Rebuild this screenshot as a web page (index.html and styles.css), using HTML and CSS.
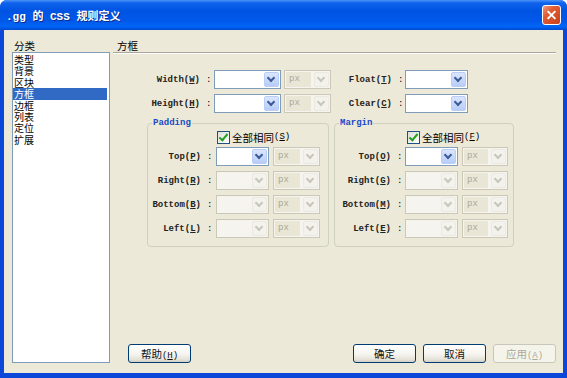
FILE: index.html
```html
<!DOCTYPE html>
<html lang="zh-CN">
<head>
  <meta charset="UTF-8" />
  <meta name="viewport" content="width=device-width, initial-scale=1.0" />
  <title>.gg 的 CSS 规则定义</title>
  <link rel="stylesheet" href="styles.css">
</head>
<body>
  <div class="window">
    <div class="titlebar">
      <span class="title">.gg 的 CSS 规则定义</span>
      <span class="close"></span>
    </div>

    <div class="client">
      <div class="categories">
        <div class="cap cjk">分类</div>
        <ul class="list cjk">
          <li>类型</li>
          <li>背景</li>
          <li>区块</li>
          <li class="sel">方框</li>
          <li>边框</li>
          <li>列表</li>
          <li>定位</li>
          <li>扩展</li>
        </ul>
      </div>

      <div class="panel">
        <div class="heading cjk">方框</div>

        <div class="top-fields">
          <div class="rows group-left">
            <div class="row">
              <span class="lbl">Width(<u>W</u>)</span><span class="colon">:</span>
              <span class="combo size"><span class="val"></span><span class="drop"></span></span>
              <span class="combo unit off"><span class="val">px</span><span class="drop"></span></span>
            </div>
            <div class="row">
              <span class="lbl">Height(<u>H</u>)</span><span class="colon">:</span>
              <span class="combo size"><span class="val"></span><span class="drop"></span></span>
              <span class="combo unit off"><span class="val">px</span><span class="drop"></span></span>
            </div>
          </div>
          <div class="rows group-right">
            <div class="row">
              <span class="lbl">Float(<u>T</u>)</span><span class="colon">:</span>
              <span class="combo float"><span class="val"></span><span class="drop"></span></span>
            </div>
            <div class="row">
              <span class="lbl">Clear(<u>C</u>)</span><span class="colon">:</span>
              <span class="combo float"><span class="val"></span><span class="drop"></span></span>
            </div>
          </div>
        </div>

        <div class="boxes">
          <fieldset class="box box-padding">
            <legend>Padding</legend>
            <div class="same"><span class="check"></span><span class="cjk">全部相同</span>(<u>S</u>)</div>
            <div class="rows">
              <div class="row">
                <span class="lbl">Top(<u>P</u>)</span><span class="colon">:</span>
                <span class="combo side"><span class="val"></span><span class="drop"></span></span>
                <span class="combo unit off"><span class="val">px</span><span class="drop"></span></span>
              </div>
              <div class="row">
                <span class="lbl">Right(<u>R</u>)</span><span class="colon">:</span>
                <span class="combo side off"><span class="val"></span><span class="drop"></span></span>
                <span class="combo unit off"><span class="val">px</span><span class="drop"></span></span>
              </div>
              <div class="row">
                <span class="lbl">Bottom(<u>B</u>)</span><span class="colon">:</span>
                <span class="combo side off"><span class="val"></span><span class="drop"></span></span>
                <span class="combo unit off"><span class="val">px</span><span class="drop"></span></span>
              </div>
              <div class="row">
                <span class="lbl">Left(<u>L</u>)</span><span class="colon">:</span>
                <span class="combo side off"><span class="val"></span><span class="drop"></span></span>
                <span class="combo unit off"><span class="val">px</span><span class="drop"></span></span>
              </div>
            </div>
          </fieldset>

          <fieldset class="box box-margin">
            <legend>Margin</legend>
            <div class="same"><span class="check"></span><span class="cjk">全部相同</span>(<u>F</u>)</div>
            <div class="rows">
              <div class="row">
                <span class="lbl">Top(<u>O</u>)</span><span class="colon">:</span>
                <span class="combo side"><span class="val"></span><span class="drop"></span></span>
                <span class="combo unit off"><span class="val">px</span><span class="drop"></span></span>
              </div>
              <div class="row">
                <span class="lbl">Right(<u>G</u>)</span><span class="colon">:</span>
                <span class="combo side off"><span class="val"></span><span class="drop"></span></span>
                <span class="combo unit off"><span class="val">px</span><span class="drop"></span></span>
              </div>
              <div class="row">
                <span class="lbl">Bottom(<u>M</u>)</span><span class="colon">:</span>
                <span class="combo side off"><span class="val"></span><span class="drop"></span></span>
                <span class="combo unit off"><span class="val">px</span><span class="drop"></span></span>
              </div>
              <div class="row">
                <span class="lbl">Left(<u>E</u>)</span><span class="colon">:</span>
                <span class="combo side off"><span class="val"></span><span class="drop"></span></span>
                <span class="combo unit off"><span class="val">px</span><span class="drop"></span></span>
              </div>
            </div>
          </fieldset>
        </div>

        <div class="footer">
          <button class="btn"><span class="cjk">帮助</span>(<u>H</u>)</button>
          <button class="btn push cjk">确定</button>
          <button class="btn cjk">取消</button>
          <button class="btn" disabled><span class="cjk">应用</span>(<u>A</u>)</button>
        </div>
      </div>
    </div>
  </div>
</body>
</html>
```

FILE: styles.css
```css
* {
  box-sizing: border-box;
}
body {
  margin: 0;
  background: #fff;
  font-family: "Liberation Mono", "Noto Sans CJK SC", monospace;
  font-size: 9px;
  color: #000;
}
.cjk {
  font-family: "Noto Sans CJK SC", sans-serif;
  font-size: 10.5px;
}

/* window frame */
.window {
  width: 567px;
  height: 378px;
  display: flex;
  flex-direction: column;
  background: #0b47d8;
  border-radius: 7px 7px 0 0;
  overflow: hidden;
}
.titlebar {
  height: 30px;
  flex-shrink: 0;
  display: flex;
  align-items: center;
  justify-content: space-between;
  padding: 0 6px 0 6px;
  background: linear-gradient(to bottom, #4a93f8 0%, #0f62ea 10%, #0054e3 35%, #0058ea 70%, #0066f7 88%, #0049d0 100%);
  color: #fff;
}
.title {
  font-family: "Liberation Mono", "Noto Sans CJK SC", monospace;
  font-size: 11px;
  font-weight: bold;
  text-shadow: 1px 1px #0b2a90;
}
.close {
  position: relative;
  width: 19px;
  height: 20px;
  border: 1px solid #fff;
  border-radius: 3px;
  background: linear-gradient(135deg, #f29b7d 0%, #e25c33 35%, #c8401b 100%);
}
.close::before,
.close::after {
  content: "";
  position: absolute;
  left: 3px;
  top: 8px;
  width: 11px;
  height: 2px;
  background: #fff;
  transform: rotate(45deg);
}
.close::after {
  transform: rotate(-45deg);
}

.client {
  flex: 1;
  margin: 0 4px 5px 4px;
  background: #ece9d8;
  display: flex;
  gap: 3px;
  padding: 9px 7px 10px 8px;
}

/* category list */
.categories {
  width: 98px;
  display: flex;
  flex-direction: column;
}
.cap {
  height: 13px;
  line-height: 13px;
  padding-left: 2px;
}
.list {
  flex: 1;
  margin: 0;
  padding: 1px 0 0 0;
  list-style: none;
  background: #fff;
  border: 1px solid #7f9db9;
  font-size: 10px;
}
.list li {
  line-height: 11.4px;
  height: 11.4px;
  padding-left: 1px;
  margin-right: 2px;
}
.list li.sel {
  background: #316ac5;
  color: #fff;
}

/* right panel */
.panel {
  flex: 1;
  display: flex;
  flex-direction: column;
}
.heading {
  height: 14px;
  line-height: 13px;
  padding-left: 4px;
  border-bottom: 1px solid #aca899;
  box-shadow: 0 1px 0 #fff;
}
.top-fields {
  display: flex;
  margin: 17px 0 0 27px;
}
.rows {
  display: flex;
  flex-direction: column;
  gap: 5px;
}
.row {
  display: flex;
  align-items: center;
  height: 19px;
}
.lbl {
  text-align: right;
  white-space: nowrap;
  font-weight: bold;
  color: #222;
}
.colon {
  padding-left: 6px;
}
.group-left .lbl { width: 60px; }
.group-left .colon { width: 14px; }
.group-right .lbl { width: 61px; }
.group-right .colon { width: 13px; }

/* combo boxes */
.combo {
  display: flex;
  height: 19px;
  padding: 1px;
  border: 1px solid #7f9db9;
  background: #fff;
}
.combo .val {
  flex: 1;
  padding-left: 3px;
  line-height: 15px;
  color: #aca899;
}
.combo .drop {
  position: relative;
  width: 15px;
  border: 1px solid #b8cdf7;
  border-radius: 2px;
  background: linear-gradient(to bottom, #dbe6fd, #b7cdf8);
}
.combo .drop::after {
  content: "";
  position: absolute;
  left: 3px;
  top: 2px;
  width: 4px;
  height: 4px;
  border-right: 2px solid #3d5a99;
  border-bottom: 2px solid #3d5a99;
  transform: rotate(45deg);
}
.combo.off {
  border-color: #cbc8b8;
  background: #f5f4ee;
}
.combo.off .drop {
  border-color: #eceae0;
  background: #f3f2ec;
}
.combo.off .drop::after {
  border-color: #c9c7ba;
}
.combo.unit .val {
  background: #e9e6d6;
  margin-right: 3px;
}
.size { width: 67px; }
.unit { width: 47px; margin-left: 3px; }
.float { width: 63px; }
.side { width: 53px; }
.box .unit { margin-left: 4px; }
.box-margin .unit { width: 46px; }

/* group boxes */
.boxes {
  display: flex;
  gap: 5px;
  margin: 4px 0 0 34px;
}
.box {
  margin: 0;
  padding: 0 0 8px 0;
  min-width: 0;
  border: 1px solid #d0d0bf;
  border-radius: 4px;
}
.box-padding { width: 182px; }
.box-margin { width: 180px; }
.box legend {
  margin-left: 4px;
  padding: 0 1px;
  line-height: 12px;
  font-weight: bold;
  color: #1a49c8;
}
.box-padding .lbl { width: 53px; }
.box-padding .colon { width: 15px; }
.box-margin .lbl { width: 56px; }
.box-margin .colon { width: 14px; }
.same {
  display: flex;
  align-items: center;
  height: 14px;
  margin: 1px 0 3px 69px;
}
.box-margin .same {
  margin-left: 72px;
}
.check {
  position: relative;
  width: 13px;
  height: 13px;
  margin-right: 2px;
  border: 1px solid #1c5180;
  background: linear-gradient(135deg, #dcdcd7, #fff);
}
.check::after {
  content: "";
  position: absolute;
  left: 3px;
  top: 0;
  width: 3px;
  height: 7px;
  border-right: 2px solid #21a121;
  border-bottom: 2px solid #21a121;
  transform: rotate(40deg);
}

/* buttons */
.footer {
  display: flex;
  gap: 7px;
  margin-top: auto;
  padding-left: 15px;
}
.btn {
  width: 63px;
  height: 19px;
  padding: 0;
  border: 1px solid #003c74;
  border-radius: 3px;
  background: linear-gradient(to bottom, #fff 0%, #f5f4ef 55%, #e5e2d8 85%, #d6d0c5 100%);
  font-family: "Liberation Mono", "Noto Sans CJK SC", monospace;
  font-size: 9px;
  color: #111;
}
.btn.cjk {
  font-family: "Noto Sans CJK SC", sans-serif;
  font-size: 10.5px;
}
.btn:disabled {
  border-color: #c9c7ba;
  background: #f5f4ea;
  color: #aca899;
}
.push {
  margin-left: auto;
}
```
